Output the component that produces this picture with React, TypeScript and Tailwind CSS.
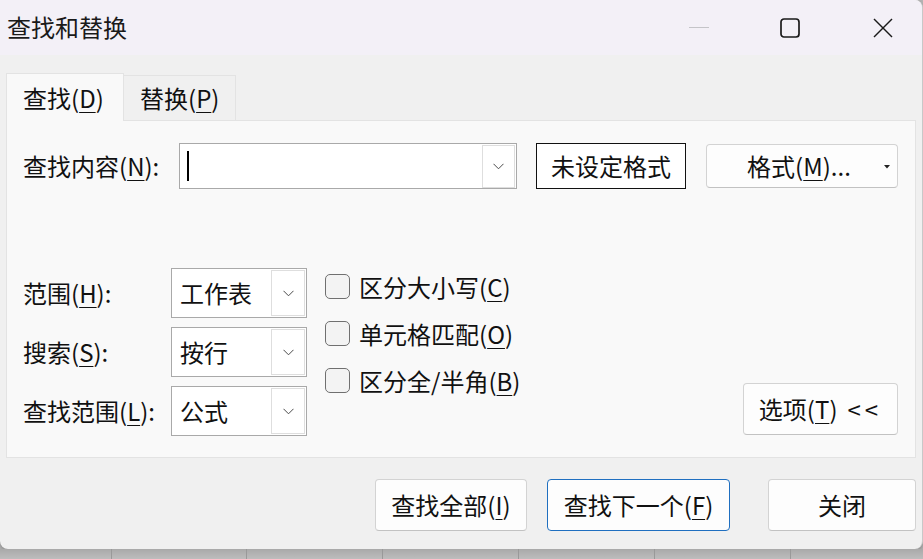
import React from "react";

const FONT = { fontFamily: '"Noto Sans CJK SC", "Noto Sans", sans-serif' };

function U({ children }: { children: React.ReactNode }) {
  return <span className="underline decoration-1 underline-offset-[4px]">{children}</span>;
}

function Chevron() {
  return (
    <svg width="11" height="7" viewBox="0 0 11 7">
      <polyline points="0.5,0.8 5.5,5.8 10.5,0.8" fill="none" stroke="#4a4a4a" strokeWidth="1" />
    </svg>
  );
}

function Combo({ value }: { value: string }) {
  return (
    <div className="flex h-[50px] w-[136px] items-center border border-[#a9a9a9] bg-white">
      <span className="ml-[8px] flex-1 text-[24px] leading-none text-[#111]">{value}</span>
      <div className="mr-[1px] flex h-[46px] w-[34px] items-center justify-center border border-[#dedede] bg-white">
        <Chevron />
      </div>
    </div>
  );
}

function CheckRow({ children }: { children: React.ReactNode }) {
  return (
    <div className="flex h-[25px] items-center">
      <div className="h-[25px] w-[25px] rounded-[5px] border-[1.5px] border-[#707070] bg-[#f3f3f3]" />
      <span className="ml-[9px] text-[24px] leading-none text-[#111]">{children}</span>
    </div>
  );
}

function Btn({ w, children, blue }: { w: string; children: React.ReactNode; blue?: boolean }) {
  return (
    <div
      className={`flex h-[52px] items-center justify-center rounded-[4px] border bg-[#fdfdfd] text-[24px] leading-none text-[#111] ${w} ${
        blue ? "border-[#1f6fc0]" : "border-[#d3d3d3] border-b-[#c2c2c2]"
      }`}
    >
      {children}
    </div>
  );
}

export default function App() {
  return (
    <div className="relative h-[559px] w-[923px] overflow-hidden bg-[#b5b5b5]" style={FONT}>
      <div className="flex h-[549px] w-[923px] flex-col overflow-hidden rounded-br-[8px] rounded-bl-[8px] rounded-tr-[8px] border-r border-[#c8c8c8] bg-[#f0f0f0] shadow-[0_2px_4px_rgba(0,0,0,0.25)]">
        {/* Title bar */}
        <div className="flex h-[55px] items-center bg-[#f3f0f7]">
          <span className="ml-[7px] mt-[-2px] text-[24px] leading-none text-[#1a1a1a]">查找和替换</span>
          <div className="ml-auto flex items-center pr-[29px]">
            <div className="h-[1.5px] w-[20px] bg-[#c4c4c8]" />
            <svg className="ml-[71px]" width="20" height="20" viewBox="0 0 20 20">
              <rect x="1" y="1" width="18" height="18" rx="3" fill="none" stroke="#1a1a1a" strokeWidth="1.7" />
            </svg>
            <svg className="ml-[73px]" width="20" height="20" viewBox="0 0 20 20">
              <line x1="1" y1="1" x2="19" y2="19" stroke="#1a1a1a" strokeWidth="1.5" />
              <line x1="19" y1="1" x2="1" y2="19" stroke="#1a1a1a" strokeWidth="1.5" />
            </svg>
          </div>
        </div>

        {/* Tabs */}
        <div className="flex items-end pl-[6px] pt-[18px]">
          <div className="relative z-10 mb-[-1px] flex h-[48px] w-[118px] items-center border border-b-0 border-[#e3e3e3] bg-[#f9f9f9] pl-[16px] text-[24px] leading-none text-[#111]">
            查找(<U>D</U>)
          </div>
          <div className="flex h-[45px] w-[112px] items-center border border-b-0 border-l-0 border-[#e3e3e3] bg-[#f0f0f0] pl-[16px] text-[24px] leading-none text-[#111]">
            替换(<U>P</U>)
          </div>
        </div>

        {/* Panel */}
        <div className="mx-[6px] flex h-[338px] w-[910px] flex-col border border-[#e3e3e3] bg-[#f9f9f9] pl-[16px] pt-[22px]">
          {/* Find row */}
          <div className="flex items-center">
            <span className="w-[156px] text-[24px] leading-none text-[#111]">
              查找内容(<U>N</U>):
            </span>
            <div className="flex h-[46px] w-[338px] items-center border border-[#a9a9a9] bg-white">
              <div className="ml-[7px] h-[30px] w-[1.5px] bg-black" />
              <div className="ml-auto mr-[1px] mt-[1px] flex h-[43px] w-[33px] items-center justify-center border border-[#dedede] bg-white">
                <Chevron />
              </div>
            </div>
            <div className="ml-[19px] flex h-[46px] w-[150px] items-center justify-center border border-[#111] bg-white text-[24px] leading-none text-[#111]">
              未设定格式
            </div>
            <div className="relative ml-[20px] flex h-[44px] w-[192px] items-center justify-center rounded-[4px] border border-[#d3d3d3] border-b-[#c2c2c2] bg-[#fdfdfd] text-[24px] leading-none text-[#111]">
              <span className="mr-[6px]">
                格式(<U>M</U>)...
              </span>
              <svg className="absolute right-[7px] top-[20px]" width="6" height="4" viewBox="0 0 6 4">
                <polygon points="0,0 6,0 3,3.5" fill="#222" />
              </svg>
            </div>
          </div>

          {/* Options */}
          <div className="mt-[79px] flex">
            <div className="flex flex-col gap-[9px]">
              {[
                { l: <>范围(<U>H</U>):</>, v: "工作表" },
                { l: <>搜索(<U>S</U>):</>, v: "按行" },
                { l: <>查找范围(<U>L</U>):</>, v: "公式" },
              ].map((r, i) => (
                <div key={i} className="flex items-center">
                  <span className="w-[148px] text-[24px] leading-none text-[#111]">{r.l}</span>
                  <Combo value={r.v} />
                </div>
              ))}
            </div>
            <div className="ml-[18px] mt-[6px] flex flex-col gap-[22px]">
              <CheckRow>
                区分大小写(<U>C</U>)
              </CheckRow>
              <CheckRow>
                单元格匹配(<U>O</U>)
              </CheckRow>
              <CheckRow>
                区分全/半角(<U>B</U>)
              </CheckRow>
            </div>
            <div className="mb-[1px] ml-auto mr-[17px] self-end">
              <Btn w="w-[155px]">
                <span>
                  选项(<U>T</U>)
                </span>
                <span className="ml-[10px] tracking-[4px]">&lt;&lt;</span>
              </Btn>
            </div>
          </div>
        </div>

        {/* Bottom buttons */}
        <div className="mt-[21px] flex justify-end pr-[6px]">
          <Btn w="w-[152px]">
            查找全部(<U>I</U>)
          </Btn>
          <div className="ml-[20px]">
            <Btn w="w-[183px]" blue>
              查找下一个(<U>F</U>)
            </Btn>
          </div>
          <div className="ml-[38px]">
            <Btn w="w-[148px]">关闭</Btn>
          </div>
        </div>
      </div>

      {/* Spreadsheet strip below */}
      <div className="flex h-[10px] bg-gradient-to-b from-[#a9a9a9] to-[#bdbdbd]">
        {[112, 135, 136, 136, 136, 136].map((w, i) => (
          <div key={i} className="h-full border-r border-[#999]" style={{ width: w }} />
        ))}
      </div>
    </div>
  );
}
